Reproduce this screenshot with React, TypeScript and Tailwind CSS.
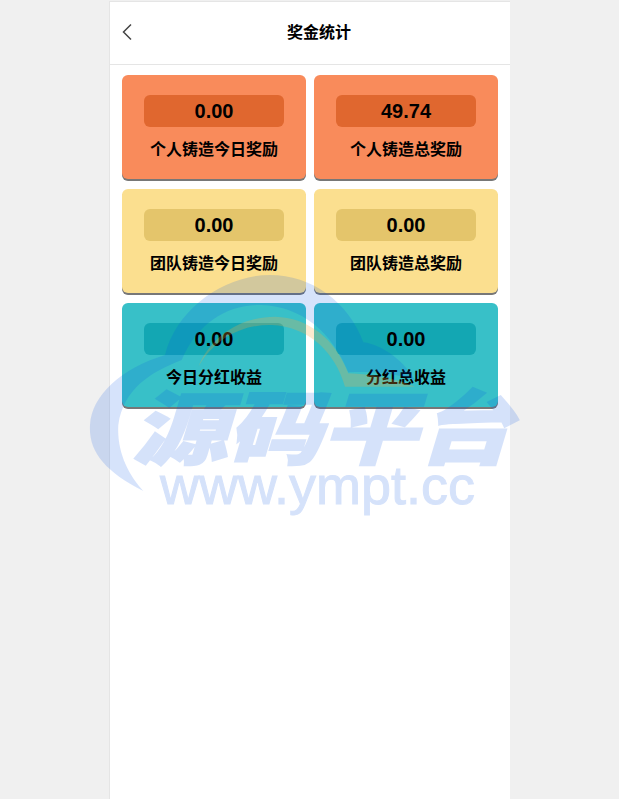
const cards = [
  { value: '0.00', label: '个人铸造今日奖励', tone: 'orange' },
  { value: '49.74', label: '个人铸造总奖励', tone: 'orange' },
  { value: '0.00', label: '团队铸造今日奖励', tone: 'yellow' },
  { value: '0.00', label: '团队铸造总奖励', tone: 'yellow' },
  { value: '0.00', label: '今日分红收益', tone: 'teal' },
  { value: '0.00', label: '分红总收益', tone: 'teal' }
];

const tones: Record<string, { card: string; box: string }> = {
  orange: { card: 'bg-[#f98b5b]', box: 'bg-[#e0672f]' },
  yellow: { card: 'bg-[#fbdf8f]', box: 'bg-[#e4c56b]' },
  teal: { card: 'bg-[#38c0c8]', box: 'bg-[#13a7b3]' }
};

function Watermark(): JSX.Element {
  return (
    <div className="pointer-events-none absolute left-[85px] top-[265px] h-[260px] w-[440px] overflow-hidden">
      <svg className="absolute left-0 top-0" width="440" height="260" viewBox="0 0 1320 780">
        <path
          d="M175 678 C60 620 10 560 15 480 C20 390 110 310 240 270 C275 130 420 30 555 30 C680 30 790 110 835 232 C890 240 950 280 990 345 C930 325 860 318 790 322 C740 200 650 125 530 120 C430 118 340 170 290 285 C200 320 115 370 100 480 C95 560 130 630 175 678 Z"
          fill="rgba(0,80,230,0.16)"
        />
        <path
          d="M340 305 C380 210 470 155 570 155 C670 158 750 220 790 325 C860 328 930 340 990 365 L780 365 C750 260 670 185 560 180 C470 178 390 220 340 305 Z"
          fill="rgba(250,170,60,0.25)"
        />
      </svg>
      <div className="absolute inset-0 text-[#0050e6] opacity-[0.16]">
        <div className="absolute left-[47px] top-[117px] origin-top-left scale-y-[0.84] whitespace-nowrap font-['Noto_Sans_CJK_SC',sans-serif] text-[95px] leading-[100px] font-black italic [-webkit-text-stroke:2px_#0050e6]">
          源码平台
        </div>
        <div className="absolute left-[75px] top-[190px] whitespace-nowrap font-['Liberation_Sans',sans-serif] text-[54px] leading-[60px] [-webkit-text-stroke:1px_#0050e6]">
          www.ympt.cc
        </div>
      </div>
    </div>
  );
}

export default function App(): JSX.Element {
  return (
    <div className="relative h-[799px] overflow-hidden bg-[#f0f0f0] pt-px font-['Liberation_Sans','Noto_Sans_CJK_SC',sans-serif]">
      <div className="mx-auto h-full w-[401px] border-t border-l border-[#e5e5e5] bg-white">
        <header className="relative flex h-[63px] items-center justify-center border-b border-[#e5e5e5] pl-[18px]">
          <svg className="absolute left-[10px] top-[21px]" width="14" height="18" viewBox="0 0 14 18" fill="none">
            <path d="M11 1.5 L3.5 9 L11 16.5" stroke="#444" strokeWidth="1.5" />
          </svg>
          <h1 className="text-base font-bold text-black">奖金统计</h1>
        </header>
        <div className="grid grid-cols-2 gap-x-2 gap-y-[10px] px-3 pt-[10px]">
          {cards.map((card) => (
            <div
              key={card.label}
              className={`flex h-[104px] flex-col items-center rounded-md pt-5 shadow-[0_2px_0_#777] ${tones[card.tone].card}`}
            >
              <div className={`flex h-8 w-[140px] items-center justify-center rounded-md text-xl font-bold text-black ${tones[card.tone].box}`}>
                {card.value}
              </div>
              <p className="mt-[11px] text-base font-bold text-black">{card.label}</p>
            </div>
          ))}
        </div>
      </div>
      <Watermark />
    </div>
  );
}
